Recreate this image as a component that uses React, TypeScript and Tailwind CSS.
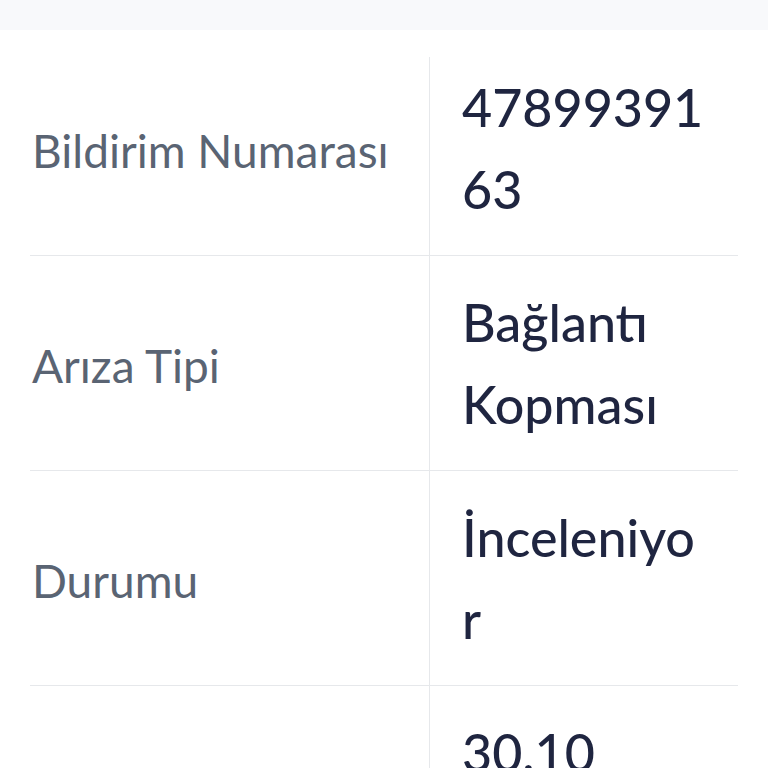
import { Fragment } from 'react'

const rows = [
  { label: 'Bildirim Numarası', value: ['4789939163'] },
  { label: 'Arıza Tipi', value: ['Bağlantı Kopması'] },
  { label: 'Durumu', value: ['İnceleniyor'] },
  { label: 'Bildirim Tarihi', value: ['30.10', '.2024'] },
]

export default function App() {
  return (
    <div className="min-h-screen bg-white font-['Lato',sans-serif]">
      <div className="h-[30px] bg-[#f8f9fb]" />
      <div className="px-[30px] pt-[11px]">
        {rows.map((row, i) => (
          <div
            key={row.label}
            className={`flex ${i < rows.length - 1 ? 'border-b border-[#e6e8eb]' : ''}`}
          >
            <div className="w-[399px] shrink-0 flex items-center px-[2px] pt-[4px] text-[46px] text-[#5a6473]">
              {row.label}
            </div>
            <div className={`w-px bg-[#e6e8eb] ${i === 0 ? 'mt-[16px]' : ''}`} />
            <div className="flex-1 min-w-0 pl-[32px] pr-[30px] py-[25px] text-[52px] leading-[82px] font-medium text-[#1f2540] break-words">
              {row.value.map((part, j) => (
                <Fragment key={j}>
                  {j > 0 && <wbr />}
                  {part}
                </Fragment>
              ))}
            </div>
          </div>
        ))}
      </div>
    </div>
  )
}
